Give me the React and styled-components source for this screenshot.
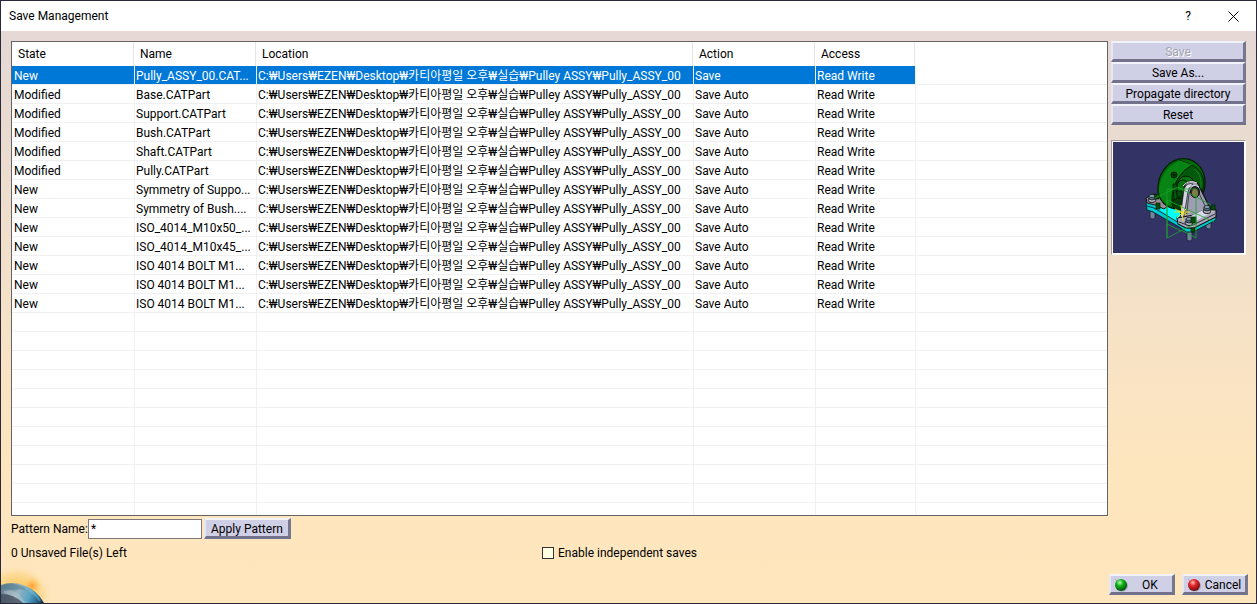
import React from "react";
import styled, { createGlobalStyle, css } from "styled-components";

const GlobalStyle = createGlobalStyle`
  *, *::before, *::after { box-sizing: border-box; }
  body { margin: 0; }
  body, button, input {
    font-family: Roboto, "Noto Sans CJK KR", sans-serif;
    font-size: 12px;
    line-height: 18px;
    color: #000;
  }
`;

const Dialog = styled.main`
  display: flex;
  flex-direction: column;
  height: 100vh;
  min-height: 400px;
  border: 1px solid #2b2839;
  background: linear-gradient(#e5d8d5 30px, #ebdccf 160px, #f6e2c6 330px, #fde5be 460px, #ffe6bd);
`;

const TitleBar = styled.header`
  display: flex;
  align-items: center;
  flex: none;
  height: 30px;
  padding: 0 11px 0 8px;
  background: #fff;
`;

const Title = styled.h1`
  flex: 1;
  margin: 0;
  font-size: 12px;
  font-weight: 400;
`;

const TitleButton = styled.button`
  display: grid;
  place-items: center;
  width: 24px;
  height: 24px;
  margin-left: 21px;
  padding: 0;
  border: 0;
  background: none;
`;

const Content = styled.div`
  display: flex;
  flex: 1;
  min-height: 0;
  gap: 3px;
  padding: 10px 10px 0;
`;

const ListPane = styled.div`
  flex: 1;
  min-width: 0;
  overflow: hidden;
  border: 1px solid #646464;
  background: #fff;
`;

const FileTable = styled.table`
  width: 100%;
  table-layout: fixed;
  border-collapse: separate;
  border-spacing: 0;
`;

const HeadCell = styled.th`
  height: 24px;
  padding: 0 5px;
  text-align: left;
  font-weight: 400;
  background: linear-gradient(#e5e5e5, #e5e5e5) right 1px top 0 / 1px 100% no-repeat;
  &:first-child { padding-left: 6px; }
  &:last-child { background: none; }
`;

const Cell = styled.td`
  height: 19px;
  padding: 2px 1px 0;
  overflow: hidden;
  line-height: 16px;
  white-space: nowrap;
  border-right: 1px solid #f0f0f0;
  border-bottom: 1px solid #f0f0f0;
  &:first-child { padding-left: 2px; }
  &:last-child { border-right: 0; }
`;

const Row = styled.tr`
  ${(p) =>
    p.$selected &&
    css`
      color: #fff;
      ${Cell}:not(:last-child) {
        background: #0078d7;
        background-clip: padding-box;
      }
    `}
`;

const Side = styled.aside`
  flex: none;
  width: 135px;
`;

const Button = styled.button`
  display: flex;
  align-items: center;
  justify-content: center;
  gap: 4px;
  height: 21px;
  padding: 2px 5px 0;
  border: solid;
  border-width: 2px 3px 3px 2px;
  border-color: #f2f2fa #77778f #72728c #e6e6f4;
  background: #cfcfe5;
  line-height: 16px;
  white-space: nowrap;
  &:disabled {
    color: #a3a3ae;
    text-shadow: 1px 1px #fff;
  }
`;

const SideButton = styled(Button)`
  width: 100%;
`;

const DialogButton = styled(Button)`
  justify-content: flex-start;
  width: 66px;
  gap: 2px;
  padding: 1px 2px 0 3px;
`;

const ButtonText = styled.span`
  flex: 1;
  text-align: center;
`;

const Preview = styled.figure`
  height: 115px;
  margin: 15px 0 0;
  border: 1px solid;
  border-color: #a09ca0 #fff #fff #a09ca0;
  padding: 1px;
  background: #fff;
  svg { display: block; width: 100%; height: 100%; background: #333366; }
`;

const PatternForm = styled.form`
  display: flex;
  align-items: center;
  flex: none;
  height: 21px;
  margin: 2px 10px 0;
`;

const PatternLabel = styled.label`
  width: 77px;
  white-space: nowrap;
`;

const PatternInput = styled.input`
  width: 114px;
  height: 20px;
  margin-right: 2px;
  padding: 0 2px;
  border: 1px solid #7a7a7a;
  background: #fff;
`;

const StatusRow = styled.div`
  display: grid;
  grid-template-columns: 43% 1fr;
  align-items: center;
  flex: none;
  height: 20px;
  margin: 4px 10px 0;
`;

const CheckLabel = styled.label`
  display: flex;
  align-items: center;
  gap: 4px;
`;

const Checkbox = styled.input`
  appearance: none;
  width: 12px;
  height: 12px;
  margin: 0;
  border: 1px solid #333;
  background: #ffffe1;
  &:checked { background: #333; box-shadow: inset 0 0 0 2px #ffffe1; }
`;

const Footer = styled.footer`
  display: flex;
  align-items: flex-end;
  justify-content: space-between;
  flex: none;
  height: 40px;
  padding-right: 8px;
`;

const Actions = styled.div`
  display: flex;
  gap: 7px;
  padding-bottom: 8px;
`;

const Planet = styled.svg`
  display: block;
  width: 54px;
  height: 38px;
`;

const Location = "C:₩Users₩EZEN₩Desktop₩카티아평일 오후₩실습₩Pulley ASSY₩Pully_ASSY_00";

const files = [
  ["New", "Pully_ASSY_00.CAT...", "Save"],
  ["Modified", "Base.CATPart", "Save Auto"],
  ["Modified", "Support.CATPart", "Save Auto"],
  ["Modified", "Bush.CATPart", "Save Auto"],
  ["Modified", "Shaft.CATPart", "Save Auto"],
  ["Modified", "Pully.CATPart", "Save Auto"],
  ["New", "Symmetry of Suppo...", "Save Auto"],
  ["New", "Symmetry of Bush....", "Save Auto"],
  ["New", "ISO_4014_M10x50_...", "Save Auto"],
  ["New", "ISO_4014_M10x45_...", "Save Auto"],
  ["New", "ISO 4014 BOLT M1...", "Save Auto"],
  ["New", "ISO 4014 BOLT M1...", "Save Auto"],
  ["New", "ISO 4014 BOLT M1...", "Save Auto"],
];

const emptyRows = Array.from({ length: 11 }, (_, i) => i);
const columns = ["State", "Name", "Location", "Action", "Access"];

function Ball({ id, light, mid, dark }) {
  return (
    <svg width="14" height="14" viewBox="0 0 14 14" aria-hidden="true">
      <defs>
        <radialGradient id={id} cx="0.4" cy="0.3" r="0.7">
          <stop offset="0" stopColor={light} />
          <stop offset="0.4" stopColor={mid} />
          <stop offset="1" stopColor={dark} />
        </radialGradient>
      </defs>
      <ellipse cx="8" cy="8" rx="6" ry="5.6" fill="#777790" opacity="0.5" />
      <circle cx="7" cy="7" r="6" fill={`url(#${id})`} />
      <path d="M1 1l2 2" stroke="#999" strokeWidth="0.7" />
    </svg>
  );
}

function Bolt({ x, y }) {
  return (
    <g>
      <ellipse cx={x} cy={y + 2} rx="4" ry="2.6" fill="#aeb0c0" stroke="#111" strokeWidth="0.9" />
      <path d={`M${x - 3} ${y - 2}v3q3 2 6 0v-3z`} fill="#55708a" stroke="#111" strokeWidth="0.8" />
      <ellipse cx={x} cy={y - 2} rx="3" ry="1.5" fill="#86a8ba" stroke="#111" strokeWidth="0.7" />
    </g>
  );
}

function PulleyModel() {
  return (
    <svg viewBox="0 0 131 111" role="img" aria-label="Pulley assembly preview">
      {/* bolt shanks below the base */}
      <g fill="#71859a" stroke="#1a2030" strokeWidth="0.8">
        <path d="M37 69h5v7q-2.500 2-5 0z" />
        <path d="M74 88h5v10q-2.500 2-5 0z" />
        <path d="M93 77h5v9q-2.500 2-5 0z" />
      </g>
      {/* base plate */}
      <path d="M33 61L40 56 102 69 103 78 80 90 73 90 68 86 40 70 34 68z" fill="#00c8cf" stroke="#062b30" strokeWidth="1" />
      <path d="M41 64L54 58 80 70 66 81z" fill="#00ffff" />
      <path d="M34 64l7 2 27 16 6 4h6l22-12" fill="none" stroke="#062b30" strokeWidth="0.9" />
      {/* rear support foot */}
      <path d="M33 56L40 52 60 60 51 67 42 63 34 61z" fill="#9c8e99" stroke="#111" strokeWidth="1" />
      {/* pulley rim and face */}
      <path d="M45 49C44 33 54 20 66 17 80 15 91 24 92 39 93 52 83 66 70 67 59 68 47 64 45 49z" fill="#006b08" stroke="#001d02" strokeWidth="1.200" />
      <path d="M46 51C46 34 56 23 68 18L81 23C67 31 57 46 60 64 53 63 48 59 46 51z" fill="#078414" />
      <path d="M81 23C65 31 56 48 60 64" fill="none" stroke="#002c04" strokeWidth="1.200" />
      <path d="M79 23q12 6 12 20-2 15-15 22-15 2-16-9 0-22 19-33z" fill="#04580b" stroke="#001d02" strokeWidth="0.900" />
      <path d="M81 27q8 5 7 17-3 12-13 18" fill="none" stroke="#13841c" strokeWidth="1" />
      <path d="M64 17l14 5M55 22l9-4" stroke="#002c04" strokeWidth="0.900" />
      <circle cx="61" cy="33" r="3" fill="#024508" stroke="#001d02" />
      <path d="M58 33h6M61 30v6" stroke="#001d02" strokeWidth="0.700" />
      <ellipse cx="73" cy="45" rx="9" ry="11" fill="#087310" stroke="#001d02" />
      <ellipse cx="70" cy="48" rx="7" ry="10" fill="none" stroke="#001d02" />
      <ellipse cx="66" cy="62" rx="7" ry="6" fill="#033d08" stroke="#001d02" />
      {/* front support bracket */}
      <path d="M67 77L71 46Q73 39 79 39q6 0 8 7l10 20-8 13-16 3z" fill="#9b9bad" stroke="#111" strokeWidth="1.200" />
      <path d="M73 78L76 52Q79 43 84 47l10 21-10 10z" fill="#9d9db4" stroke="#292934" strokeWidth="0.800" />
      <path d="M67 77L71 47Q74 40 80 42q-5 3-6 14l-4 24z" fill="#d4d4e0" stroke="#22222c" strokeWidth="0.800" />
      <path d="M70 44q6-7 14-3M72 48q6-7 14-3" fill="none" stroke="#e0e0ea" strokeWidth="1" />
      <ellipse cx="82" cy="50" rx="4.500" ry="5.500" fill="#2c2d30" stroke="#111" />
      <ellipse cx="82" cy="51" rx="3" ry="4" fill="#8e774c" />
      {/* front foot */}
      <path d="M64 76l17-3 14-7 8 2v7l-22 11h-8l-8-4z" fill="#a8a8b8" stroke="#111" strokeWidth="1.100" />
      <path d="M78 74l14-7 9 2-20 11z" fill="#d8d8ed" />
      <path d="M66 80l8 3h6l22-11" fill="none" stroke="#22222c" strokeWidth="0.900" />
      <Bolt x={39} y={56} />
      <Bolt x={76} y={79} />
      <Bolt x={94} y={67} />
      {/* constraint symbols and axes */}
      <g fill="#064f0a" stroke="#001d02" strokeWidth="0.700">
        <rect x="42" y="52" width="4" height="5" />
        <rect x="43" y="61" width="4" height="6" />
        <rect x="60" y="42" width="4" height="5" />
        <rect x="64" y="49" width="5" height="6" />
        <rect x="78" y="75" width="5" height="6" />
        <rect x="98" y="63" width="4" height="5" />
        <rect x="78" y="86" width="4" height="4" />
      </g>
      <path d="M54 47V96L83 81V47zM54 96V58L101 80M42 56L65 45 98 63" fill="none" stroke="#19a52a" strokeWidth="0.800" />
      <path d="M54 82l14 7M83 81v15l-15-8" fill="none" stroke="#19a52a" strokeWidth="0.900" />
      <path d="M61 70h16M68 63l2 16M64 76l9-9M62 67l12 6" stroke="#f0e818" strokeWidth="0.900" />
    </svg>
  );
}

function PlanetLogo() {
  return (
    <Planet viewBox="0 0 54 38" aria-hidden="true">
      <defs>
        <radialGradient id="sun-glow">
          <stop offset="0" stopColor="#ff9d35" />
          <stop offset="0.3" stopColor="#ffae48" stopOpacity="0.8" />
          <stop offset="1" stopColor="#ffd35f" stopOpacity="0" />
        </radialGradient>
        <radialGradient id="sky-glow">
          <stop offset="0.3" stopColor="#f8c860" />
          <stop offset="0.7" stopColor="#fcd586" stopOpacity="0.7" />
          <stop offset="1" stopColor="#ffe6bd" stopOpacity="0" />
        </radialGradient>
        <linearGradient id="planet-surface" x1="0" y1="0.6" x2="1" y2="0.8">
          <stop offset="0" stopColor="#6b8494" />
          <stop offset="0.35" stopColor="#94b2c0" />
          <stop offset="0.65" stopColor="#58a3c4" />
          <stop offset="0.85" stopColor="#2b6c92" />
          <stop offset="1" stopColor="#163048" />
        </linearGradient>
      </defs>
      <ellipse cx="16" cy="30" rx="36" ry="30" fill="url(#sky-glow)" />
      <circle cx="31" cy="21" r="9" fill="url(#sun-glow)" />
      <path d="M0 20Q10 16 22 20 36 25 43 38H0z" fill="url(#planet-surface)" />
      <path d="M0 21Q10 17 20 21l8 5q-8-3-13-1L0 24z" fill="#4c7a90" opacity="0.5" />
      <path d="M3 26q8-2 15 3l7 9H16Q12 30 3 28z" fill="#d0d6d8" opacity="0.35" />
      <path d="M0 29q13 0 22 9H0z" fill="#3c4251" opacity="0.7" />
      <path d="M24 23q10 4 15 13" fill="none" stroke="#8ccde2" strokeWidth="2" opacity="0.4" />
    </Planet>
  );
}

export default function App() {
  return (
    <>
      <GlobalStyle />
      <Dialog>
        <TitleBar>
          <Title>Save Management</Title>
          <TitleButton aria-label="Help">?</TitleButton>
          <TitleButton aria-label="Close">
            <svg width="11" height="11" viewBox="0 0 11 11">
              <path d="M0.500 0.500l10 10M10.500 0.500l-10 10" stroke="#000" strokeWidth="1" />
            </svg>
          </TitleButton>
        </TitleBar>
        <Content>
          <ListPane>
            <FileTable>
              <colgroup>
                <col width="123" />
                <col width="122" />
                <col width="437" />
                <col width="122" />
                <col width="100" />
                <col />
              </colgroup>
              <thead>
                <tr>
                  {columns.map((c) => (
                    <HeadCell key={c} scope="col">{c}</HeadCell>
                  ))}
                  <HeadCell as="td" />
                </tr>
              </thead>
              <tbody>
                {files.map(([state, name, action], i) => (
                  <Row key={i} $selected={i === 0}>
                    <Cell>{state}</Cell>
                    <Cell>{name}</Cell>
                    <Cell>{Location}</Cell>
                    <Cell>{action}</Cell>
                    <Cell>Read Write</Cell>
                    <Cell />
                  </Row>
                ))}
                {emptyRows.map((i) => (
                  <Row key={i}>
                    <Cell /><Cell /><Cell /><Cell /><Cell /><Cell />
                  </Row>
                ))}
              </tbody>
            </FileTable>
          </ListPane>
          <Side>
            <SideButton disabled>Save</SideButton>
            <SideButton>Save As...</SideButton>
            <SideButton>Propagate directory</SideButton>
            <SideButton>Reset</SideButton>
            <Preview><PulleyModel /></Preview>
          </Side>
        </Content>
        <PatternForm onSubmit={(e) => e.preventDefault()}>
          <PatternLabel htmlFor="pattern">Pattern Name:</PatternLabel>
          <PatternInput id="pattern" type="text" defaultValue="*" />
          <Button type="submit">Apply Pattern</Button>
        </PatternForm>
        <StatusRow>
          <span>0 Unsaved File(s) Left</span>
          <CheckLabel>
            <Checkbox type="checkbox" />
            Enable independent saves
          </CheckLabel>
        </StatusRow>
        <Footer>
          <PlanetLogo />
          <Actions>
            <DialogButton>
              <Ball id="ball-ok" light="#b8ffb0" mid="#12b51c" dark="#045009" />
              <ButtonText>OK</ButtonText>
            </DialogButton>
            <DialogButton>
              <Ball id="ball-cancel" light="#ffc0b0" mid="#e5262a" dark="#700b10" />
              <ButtonText>Cancel</ButtonText>
            </DialogButton>
          </Actions>
        </Footer>
      </Dialog>
    </>
  );
}
